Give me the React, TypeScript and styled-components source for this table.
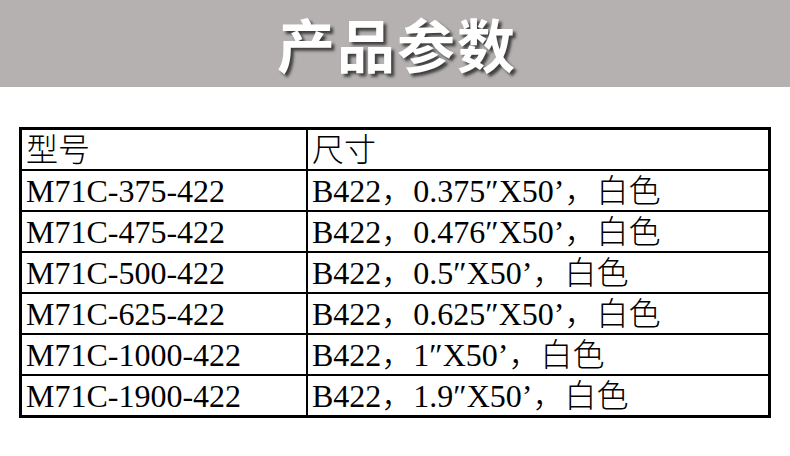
import { createGlobalStyle } from "styled-components";
import styled from "styled-components";

const GlobalStyle = createGlobalStyle`
  html, body {
    margin: 0;
    padding: 0;
    background: #ffffff;
  }
`;

const rows = [
  ["M71C-375-422", "B422，0.375″X50’，白色"],
  ["M71C-475-422", "B422，0.476″X50’，白色"],
  ["M71C-500-422", "B422，0.5″X50’，白色"],
  ["M71C-625-422", "B422，0.625″X50’，白色"],
  ["M71C-1000-422", "B422，1″X50’，白色"],
  ["M71C-1900-422", "B422，1.9″X50’，白色"],
];

const Page = styled.div`
  width: 790px;
  height: 456px;
  background: #fff;
  overflow: hidden;
`;

const Banner = styled.div`
  height: 87px;
  background: #b4b1b0;
  display: flex;
  align-items: center;
  justify-content: center;
`;

const Title = styled.h1`
  margin: 0 0 2px 4px;
  font-family: "Noto Sans CJK SC", sans-serif;
  font-weight: 700;
  font-size: 58px;
  line-height: 1;
  color: #fff;
  letter-spacing: 2px;
  text-shadow: 3px 3px 3px rgba(0, 0, 0, 0.65);
`;

const Wrap = styled.div`
  padding: 40px 19px 0 19px;
`;

const Table = styled.table`
  width: 752px;
  border-collapse: collapse;
  border: 3px solid #000;
  font-family: "Liberation Serif", "Noto Sans CJK SC", serif;
  font-weight: 300;
  font-size: 32px;
  color: #000;
`;

const Cell = styled.td<{ $first?: boolean }>`
  height: 39px;
  padding: 0 4px;
  border: 2px solid #000;
  width: ${({ $first }) => ($first ? "276px" : "auto")};
  line-height: 38px;
  white-space: nowrap;
  vertical-align: bottom;
`;

export default function App() {
  return (
    <Page>
      <GlobalStyle />
      <Banner>
        <Title>产品参数</Title>
      </Banner>
      <Wrap>
        <Table>
          <tbody>
            <tr>
              <Cell $first>型号</Cell>
              <Cell>尺寸</Cell>
            </tr>
            {rows.map(([model, size]) => (
              <tr key={model}>
                <Cell $first>{model}</Cell>
                <Cell>{size}</Cell>
              </tr>
            ))}
          </tbody>
        </Table>
      </Wrap>
    </Page>
  );
}
